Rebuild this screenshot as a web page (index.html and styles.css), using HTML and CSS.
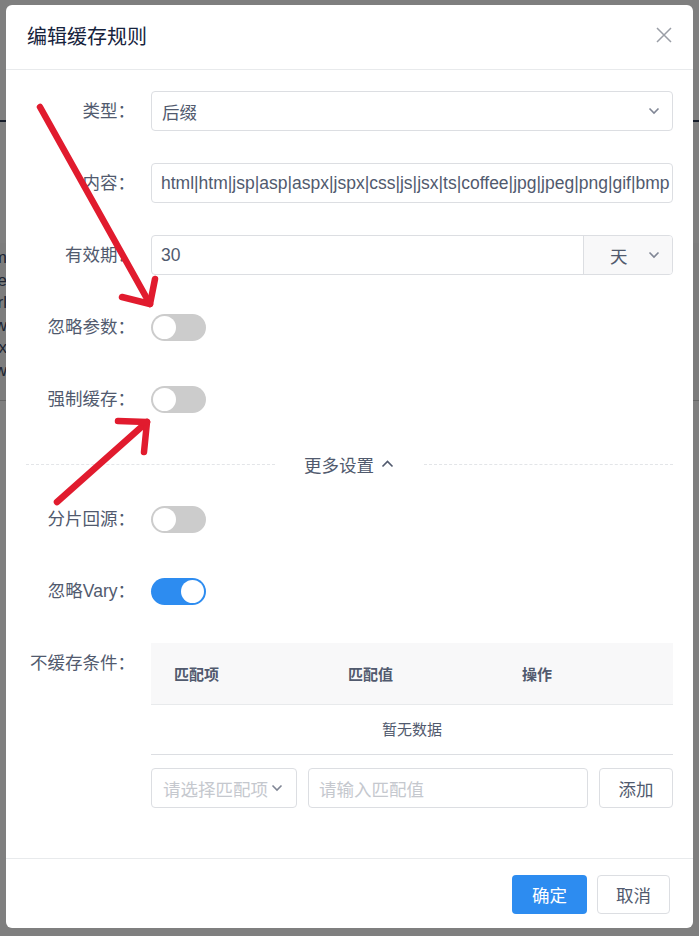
FILE: index.html
```html
<!DOCTYPE html>
<html lang="zh-CN">
<head>
<meta charset="utf-8">
<title>编辑缓存规则</title>
<link rel="stylesheet" href="styles.css">
</head>
<body>
<div class="page-behind">
  <div class="behind-line behind-line-top"></div>
  <div class="behind-panel">
    <div class="behind-text">
      <div>htm</div><div>range</div><div>ctrl</div><div>www</div><div>jsx</div><div>www</div>
    </div>
  </div>
</div>
<div class="mask"></div>

<div class="modal">
  <div class="modal-header">
    <div class="modal-title">编辑缓存规则</div>
    <svg class="modal-close" width="16" height="16" viewBox="0 0 16 16"><path d="M1 1 L15 15 M15 1 L1 15" stroke="#9a9ea6" stroke-width="1.5" fill="none"/></svg>
  </div>

  <div class="modal-body">
    <div class="form-row">
      <div class="form-label">类型：</div>
      <div class="form-control">
        <div class="select">
          <span class="select-value">后缀</span>
          <svg class="chev" width="12" height="8" viewBox="0 0 12 8"><path d="M1.5 1.5 L6 6 L10.5 1.5" stroke="#808695" stroke-width="1.6" fill="none"/></svg>
        </div>
      </div>
    </div>

    <div class="form-row">
      <div class="form-label">内容：</div>
      <div class="form-control">
        <div class="input">
          <div class="input-clip">html|htm|jsp|asp|aspx|jspx|css|js|jsx|ts|coffee|jpg|jpeg|png|gif|bmp|swf|ico</div>
        </div>
      </div>
    </div>

    <div class="form-row">
      <div class="form-label">有效期：</div>
      <div class="form-control">
        <div class="input-group">
          <div class="group-input">30</div>
          <div class="group-append">
            <span>天</span>
            <svg class="chev" width="12" height="8" viewBox="0 0 12 8"><path d="M1.5 1.5 L6 6 L10.5 1.5" stroke="#808695" stroke-width="1.6" fill="none"/></svg>
          </div>
        </div>
      </div>
    </div>

    <div class="form-row">
      <div class="form-label">忽略参数：</div>
      <div class="form-control switch-cell"><span class="switch"><span class="knob"></span></span></div>
    </div>

    <div class="form-row">
      <div class="form-label">强制缓存：</div>
      <div class="form-control switch-cell"><span class="switch"><span class="knob"></span></span></div>
    </div>

    <div class="divider">
      <div class="divider-line"></div>
      <div class="divider-text">更多设置
        <svg class="chev-up" width="13" height="8" viewBox="0 0 13 8"><path d="M1.5 6.5 L6.5 1.5 L11.5 6.5" stroke="#515a6e" stroke-width="1.6" fill="none"/></svg>
      </div>
      <div class="divider-line"></div>
    </div>

    <div class="form-row">
      <div class="form-label">分片回源：</div>
      <div class="form-control switch-cell"><span class="switch"><span class="knob"></span></span></div>
    </div>

    <div class="form-row">
      <div class="form-label">忽略Vary：</div>
      <div class="form-control switch-cell"><span class="switch on"><span class="knob"></span></span></div>
    </div>

    <div class="form-row last">
      <div class="form-label">不缓存条件：</div>
      <div class="form-control">
        <div class="table">
          <div class="table-head">
            <div class="th">匹配项</div>
            <div class="th">匹配值</div>
            <div class="th">操作</div>
          </div>
          <div class="table-empty">暂无数据</div>
        </div>
        <div class="add-row">
          <div class="add-select">
            <span class="placeholder">请选择匹配项</span>
            <svg class="chev" width="12" height="8" viewBox="0 0 12 8"><path d="M1.5 1.5 L6 6 L10.5 1.5" stroke="#808695" stroke-width="1.6" fill="none"/></svg>
          </div>
          <div class="add-input"><span class="placeholder">请输入匹配值</span></div>
          <div class="btn btn-default btn-add">添加</div>
        </div>
      </div>
    </div>
  </div>

  <div class="modal-footer">
    <div class="btn btn-primary">确定</div>
    <div class="btn btn-default">取消</div>
  </div>
</div>

<svg class="annotations" width="699" height="936" viewBox="0 0 699 936">
  <g stroke="#e11b2e" stroke-width="6.5" stroke-linecap="round" stroke-linejoin="round" fill="none">
    <path d="M40 107 L150 304"/>
    <path d="M122 297 L150 304 L155 279"/>
    <path d="M57 502 L147 422"/>
    <path d="M118 421 L147 422 L144 452"/>
  </g>
</svg>
</body>
</html>
```

FILE: styles.css
```css
* { box-sizing: border-box; }

html, body {
  margin: 0;
  padding: 0;
}

body {
  width: 699px;
  height: 936px;
  overflow: hidden;
  position: relative;
  background: #ffffff;
  font-family: "Liberation Sans", "Noto Sans CJK SC", sans-serif;
  color: #515a6e;
}

/* page behind the mask */
.page-behind {
  position: absolute;
  inset: 0;
  background: #fff;
}
.behind-line-top {
  position: absolute;
  left: 0;
  top: 120px;
  width: 699px;
  height: 2px;
  background: #2d3a55;
}
.behind-panel {
  position: absolute;
  left: 0;
  top: 243px;
  width: 699px;
  height: 158px;
  background: #fafafa;
  border-bottom: 1px solid #ccc;
}
.behind-text {
  position: absolute;
  right: 692px;
  top: 4px;
  text-align: right;
  font-size: 17px;
  line-height: 22.5px;
  color: #3d4a66;
}

.mask {
  position: absolute;
  inset: 0;
  background: rgba(0, 0, 0, 0.5);
}

/* modal */
.modal {
  position: absolute;
  left: 6px;
  top: 5px;
  width: 687px;
  height: 923px;
  background: #fff;
  border-radius: 6px;
  display: flex;
  flex-direction: column;
}

.modal-header {
  height: 65px;
  border-bottom: 1px solid #e8eaec;
  display: flex;
  align-items: center;
  justify-content: space-between;
  padding: 0 21px 4px 21px;
}
.modal-title {
  font-size: 20px;
  color: #17233d;
  font-family: "Noto Sans CJK SC", sans-serif;
}

.modal-body {
  flex: 1;
  padding: 21px 20px 0 20px;
}

.form-row {
  display: flex;
  margin-bottom: 32px;
}
.form-label {
  width: 125px;
  flex: none;
  padding-right: 16px;
  text-align: right;
  line-height: 40px;
  font-size: 17.5px;
  white-space: nowrap;
}
.form-control {
  flex: 1;
  min-width: 0;
}

.select, .input, .input-group, .add-select, .add-input {
  height: 40px;
  border: 1px solid #dcdee2;
  border-radius: 4px;
  background: #fff;
}

.select {
  display: flex;
  align-items: center;
  justify-content: space-between;
  padding: 0 12px 0 10px;
  font-size: 17.5px;
}

.input {
  padding: 0 2px 0 9px;
}
.input-clip {
  overflow: hidden;
  white-space: nowrap;
  line-height: 38px;
  font-size: 17.5px;
}

.input-group {
  display: flex;
  overflow: hidden;
}
.group-input {
  flex: 1;
  padding-left: 9px;
  line-height: 38px;
  font-size: 17.5px;
}
.group-append {
  width: 89px;
  background: #f8f8f9;
  border-left: 1px solid #dcdee2;
  display: flex;
  align-items: center;
  justify-content: space-between;
  padding: 0 12px 0 26px;
  font-size: 17.5px;
}

.switch-cell {
  display: flex;
  align-items: center;
  height: 40px;
}
.switch {
  position: relative;
  display: block;
  width: 55px;
  height: 27px;
  margin-top: 1px;
  border-radius: 14px;
  background: #cccccc;
}
.switch .knob {
  position: absolute;
  left: 2px;
  top: 2px;
  width: 23px;
  height: 23px;
  border-radius: 50%;
  background: #fff;
}
.switch.on { background: #2d8cf0; }
.switch.on .knob { left: 30px; }

.divider {
  display: flex;
  align-items: center;
  height: 26px;
  margin-bottom: 22px;
}
.divider-line {
  flex: 1;
  border-top: 1px dashed #e3e5e8;
}
.divider-text {
  padding: 0 30px 0 29px;
  font-size: 17.5px;
  display: flex;
  align-items: center;
  gap: 7px;
  font-family: "Noto Sans CJK SC", sans-serif;
}

.form-row.last { margin-bottom: 0; }

.table {
  font-size: 15px;
}
.table-head {
  display: grid;
  grid-template-columns: repeat(3, 1fr);
  height: 62px;
  background: #f8f8f9;
  border-bottom: 1px solid #e8eaec;
  align-items: center;
}
.th {
  padding-left: 23px;
  font-weight: bold;
  color: #515a6e;
}
.table-empty {
  height: 50px;
  line-height: 49px;
  text-align: center;
  border-bottom: 1px solid #dcdee2;
}

.add-row {
  display: flex;
  gap: 11px;
  margin-top: 13px;
}
.add-select {
  width: 146px;
  display: flex;
  align-items: center;
  justify-content: space-between;
  padding: 0 13px 0 11px;
}
.add-input {
  flex: 1;
  display: flex;
  align-items: center;
  padding-left: 10px;
}
.placeholder {
  font-size: 17.5px;
  color: #c5c8ce;
  white-space: nowrap;
}

.btn {
  height: 39px;
  border-radius: 4px;
  display: flex;
  align-items: center;
  justify-content: center;
  font-size: 17.5px;
}
.btn-default {
  border: 1px solid #dcdee2;
  background: #fff;
  color: #515a6e;
}
.btn-primary {
  background: #2d8cf0;
  color: #fff;
  width: 75px;
}
.btn-add { width: 74px; height: 40px; }

.modal-footer {
  height: 70px;
  border-top: 1px solid #e8eaec;
  display: flex;
  justify-content: flex-end;
  gap: 10px;
  padding: 16px 23px 0 0;
}
.modal-footer .btn-default { width: 73px; }

.annotations {
  position: absolute;
  left: 0;
  top: 0;
  pointer-events: none;
}
```
